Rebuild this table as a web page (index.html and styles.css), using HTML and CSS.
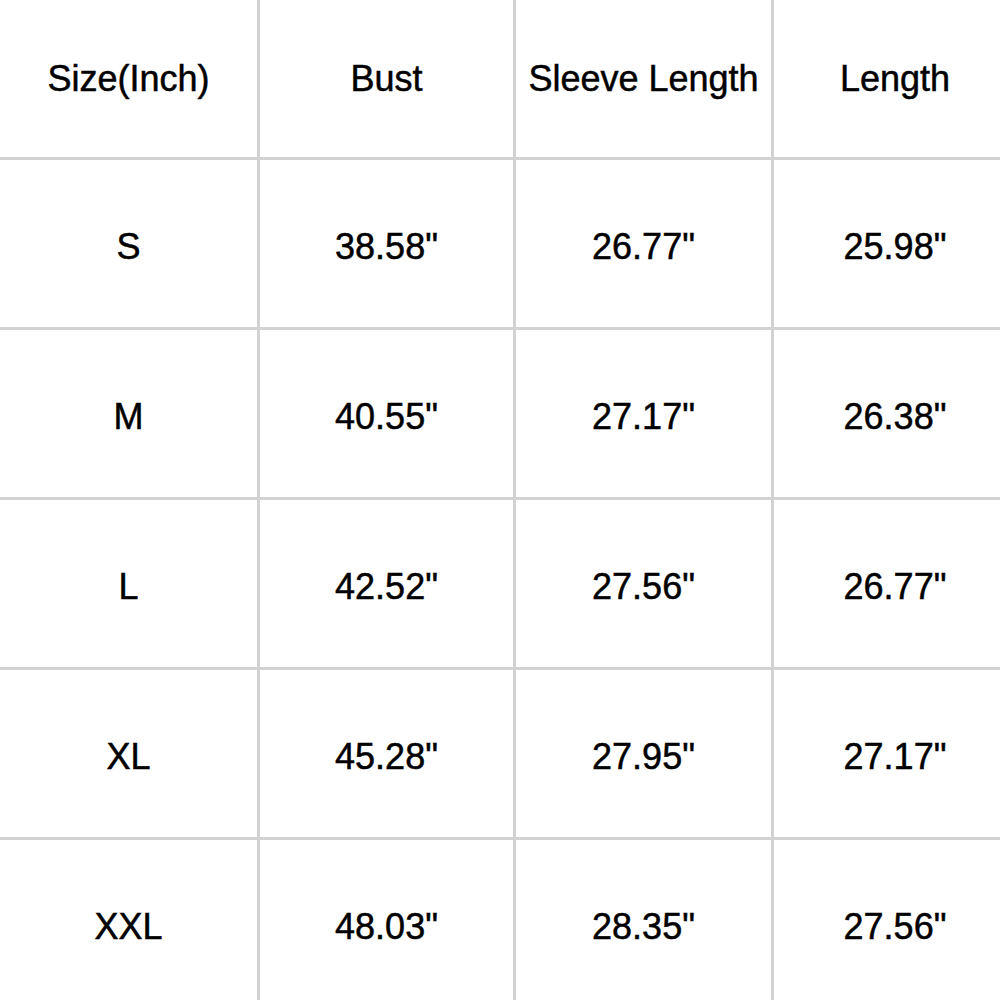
FILE: index.html
```html
<!DOCTYPE html>
<html lang="en">
<head>
<meta charset="utf-8">
<title>Size Chart</title>
<link rel="stylesheet" href="styles.css">
</head>
<body>
<div class="chart">
  <div class="cell head">Size(Inch)</div>
  <div class="cell head">Bust</div>
  <div class="cell head">Sleeve Length</div>
  <div class="cell head">Length</div>

  <div class="cell">S</div>
  <div class="cell">38.58"</div>
  <div class="cell">26.77"</div>
  <div class="cell">25.98"</div>

  <div class="cell">M</div>
  <div class="cell">40.55"</div>
  <div class="cell">27.17"</div>
  <div class="cell">26.38"</div>

  <div class="cell">L</div>
  <div class="cell">42.52"</div>
  <div class="cell">27.56"</div>
  <div class="cell">26.77"</div>

  <div class="cell">XL</div>
  <div class="cell">45.28"</div>
  <div class="cell">27.95"</div>
  <div class="cell">27.17"</div>

  <div class="cell">XXL</div>
  <div class="cell">48.03"</div>
  <div class="cell">28.35"</div>
  <div class="cell">27.56"</div>
</div>
</body>
</html>
```

FILE: styles.css
```css
html, body {
  margin: 0;
  padding: 0;
  background: #ffffff;
}

body {
  width: 1000px;
  height: 1000px;
  overflow: hidden;
}

.chart {
  display: grid;
  grid-template-columns: 257px 253px 255px 242px;
  grid-template-rows: 157px repeat(5, 167px);
  gap: 3px;
  width: 1016px;
  background: #d2d2d2;
  font-family: "Liberation Sans", Arial, sans-serif;
  font-size: 36px;
  color: #000000;
  -webkit-text-stroke: 0.5px #000000;
}

.cell {
  background: #ffffff;
  display: flex;
  align-items: center;
  justify-content: center;
  white-space: nowrap;
  padding-top: 6px;
}

.cell.head {
  padding-top: 1px;
}
```
